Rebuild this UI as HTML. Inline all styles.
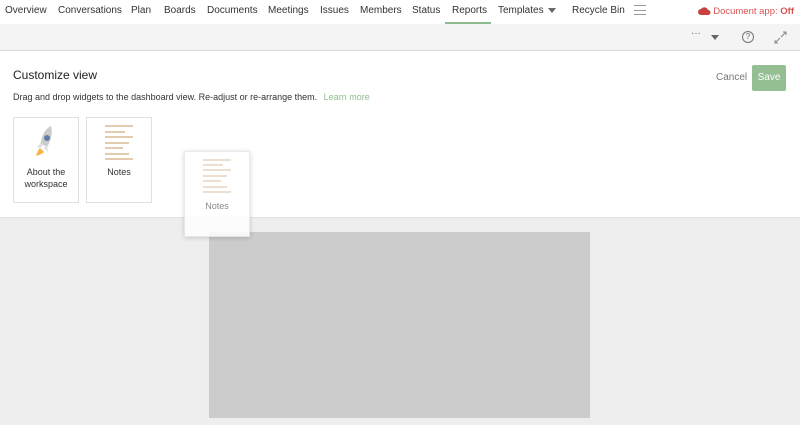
<!DOCTYPE html>
<html><head><style>
*{margin:0;padding:0;box-sizing:border-box}
body{width:800px;height:425px;overflow:hidden;font-family:"Liberation Sans",sans-serif;background:#fff;position:relative;color:#333}
.a{position:absolute;white-space:nowrap}
.nav span{position:absolute;top:5px;font-size:10px;color:#333;white-space:nowrap}
.card{position:absolute;border:1px solid #e0e0e0;background:#fff;width:66px;height:86px}
.ln{position:absolute;height:2px;background:#e3cbb0}
.lbl{position:absolute;width:100%;text-align:center;font-size:9px;line-height:12px;color:#333}
</style></head><body>
<div class="nav">
<span style="left:5px">Overview</span>
<span style="left:58px">Conversations</span>
<span style="left:131px">Plan</span>
<span style="left:164px">Boards</span>
<span style="left:207px">Documents</span>
<span style="left:268px">Meetings</span>
<span style="left:320px">Issues</span>
<span style="left:360px">Members</span>
<span style="left:412px">Status</span>
<span style="left:452px">Reports</span>
<span style="left:498px">Templates</span>
<span style="left:572px">Recycle Bin</span>
<span style="right:6px;color:#d9534f;font-size:9.5px;top:6px">Document app: <b>Off</b></span>
</div>
<div class="a" style="left:445px;top:22px;width:46px;height:2px;background:#8fbc8f"></div>
<div class="a" style="left:548px;top:8px;border-left:4px solid transparent;border-right:4px solid transparent;border-top:5px solid #666"></div>
<div class="a" style="left:634px;top:5px;width:12px;height:10px;border-top:1px solid #999;border-bottom:1px solid #999"></div>
<div class="a" style="left:634px;top:10px;width:12px;height:1px;background:#999"></div>
<svg class="a" style="left:698px;top:5px" width="13" height="11" viewBox="0 0 13 11"><path d="M3 10a3 3 0 0 1 0-6a4 4 0 0 1 7 1a2.5 2.5 0 0 1 0 5z" fill="#c9413f"/></svg>
<div class="a" style="left:0;top:24px;width:800px;height:27px;background:#f4f4f4;border-bottom:1px solid #d6d6d6"></div>
<div class="a" style="left:691px;top:28px;font-size:10px;color:#666">···</div>
<div class="a" style="left:711px;top:35px;border-left:4px solid transparent;border-right:4px solid transparent;border-top:5px solid #666"></div>
<div class="a" style="left:742px;top:31px;width:12px;height:12px;border:1px solid #777;border-radius:50%;font-size:8px;text-align:center;line-height:10px;color:#666">?</div>
<svg class="a" style="left:774px;top:31px" width="13" height="13" viewBox="0 0 13 13" fill="none" stroke="#888" stroke-width="1"><path d="M7 6l5-5M9 1h3v3M6 7l-5 5M1 9v3h3"/></svg>
<div class="a" style="left:13px;top:68px;font-size:12px;color:#222">Customize view</div>
<div class="a" style="left:13px;top:92px;font-size:9px;color:#333">Drag and drop widgets to the dashboard view. Re-adjust or re-arrange them. <span style="color:#8fbc8f;margin-left:4px">Learn more</span></div>
<div class="a" style="left:716px;top:72px;font-size:10px;color:#777">Cancel</div>
<div class="a" style="left:752px;top:65px;width:34px;height:26px;background:#93bf93;border-radius:2px;color:#fff;font-size:10px;text-align:center;line-height:26px">Save</div>
<div class="card" style="left:13px;top:117px">
<svg class="a" style="left:19px;top:6px" width="26" height="36" viewBox="0 0 26 36"><path d="M18 2c-6 3-10 10-10 18l6 3c4-6 6-14 4-21z" fill="#ccc"/><path d="M8 18l-4 6 5-1z M14 21l1 7-4-4z" fill="#ddd"/><circle cx="14" cy="14" r="3" fill="#5b7fa8"/><path d="M7 24c-2 2-3 5-4 8 3-1 6-2 8-4z" fill="#f4b342"/></svg>
<div class="lbl" style="top:48px">About the<br>workspace</div></div>
<div class="card" style="left:86px;top:117px">
<div class="ln" style="left:18px;top:7px;width:28px"></div><div class="ln" style="left:18px;top:13px;width:20px"></div><div class="ln" style="left:18px;top:18px;width:28px"></div>
<div class="ln" style="left:18px;top:24px;width:24px"></div><div class="ln" style="left:18px;top:29px;width:18px"></div>
<div class="ln" style="left:18px;top:35px;width:24px"></div><div class="ln" style="left:18px;top:40px;width:28px"></div>
<div class="lbl" style="top:48px">Notes</div></div>
<div class="a" style="left:0;top:217px;width:800px;height:208px;background:#eeeeee;border-top:1px solid #e2e2e2"></div>
<div class="a" style="left:209px;top:232px;width:381px;height:186px;background:#cccccc"></div>
<div class="card" style="left:184px;top:151px;height:86px;opacity:.85;box-shadow:0 1px 5px rgba(0,0,0,.2);border-color:#e8e8e8">
<div class="ln" style="left:18px;top:7px;width:28px;opacity:.7"></div><div class="ln" style="left:18px;top:12px;width:20px;opacity:.7"></div><div class="ln" style="left:18px;top:17px;width:28px;opacity:.7"></div>
<div class="ln" style="left:18px;top:23px;width:24px;opacity:.7"></div><div class="ln" style="left:18px;top:28px;width:18px;opacity:.7"></div>
<div class="ln" style="left:18px;top:34px;width:24px;opacity:.7"></div><div class="ln" style="left:18px;top:39px;width:28px;opacity:.7"></div>
<div class="lbl" style="top:48px;color:#777">Notes</div></div>
</body></html>
